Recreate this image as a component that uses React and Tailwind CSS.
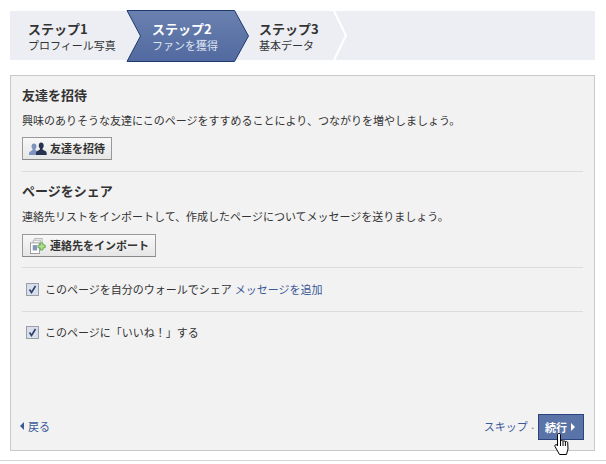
const font = { fontFamily: '"Noto Sans CJK JP", "Liberation Sans", sans-serif' };

const FriendsIcon = () => (
  <svg width="18" height="14" viewBox="0 0 18 14" className="shrink-0">
    <path d="M5 1.500c1.600 0 2.500 1.200 2.500 2.800 0 1.200-.5 2.200-1.100 2.800v1l3 1.600c.6.400.8 1 .8 2.300V13H0v-1c0-1.300.3-1.900.9-2.300l2.700-1.600v-1C3 6.500 2.500 5.500 2.500 4.300 2.500 2.700 3.400 1.500 5 1.500z" fill="#7d93c0" />
    <path d="M12 .5c1.700 0 2.700 1.300 2.700 3 0 1.300-.5 2.400-1.200 3v1.100l3.200 1.700c.7.400 1 1 1 2.400V13H7v-1.300c0-1.400.3-2 1-2.400l3-1.700V6.500c-.7-.6-1.200-1.700-1.200-3 0-1.700 1-3 2.200-3z" fill="#26324f" />
  </svg>
);

const ImportIcon = () => (
  <svg width="17" height="16" viewBox="0 0 19 18" className="shrink-0">
    <rect x="5.500" y="0.500" width="8" height="10" fill="#f4f4f4" stroke="#b5b5b5" />
    <rect x="3.500" y="2.500" width="8" height="11" fill="#f4f4f4" stroke="#b5b5b5" />
    <rect x="0.500" y="5.500" width="10" height="12" fill="#fff" stroke="#969696" />
    <rect x="3" y="8" width="5" height="6" fill="#8695b5" />
    <path d="M11.500 5.500h3v2.500H17v3h-2.500v2.500h-3V11H9V8h2.500z" fill="#b4e08f" stroke="#5fa548" />
  </svg>
);

const Check = () => (
  <span className="w-[13px] h-[13px] shrink-0 border border-[#9a9ea6] bg-[#d8deeb] flex items-center justify-center">
    <svg width="9" height="9" viewBox="0 0 9 9">
      <path d="M1.500 4.500 3.500 7.500 7.500 1" fill="none" stroke="#2d3f6c" strokeWidth="1.600" />
    </svg>
  </span>
);

const Step = ({ title, sub, active, className }) => (
  <div className={`relative h-full flex flex-col pt-[9px] ${className}`}>
    <div className={`text-[13px] leading-[17px] font-bold ${active ? 'text-white' : 'text-[#333333]'}`}>{title}</div>
    <div className={`text-[11px] leading-[17px] ${active ? 'text-[#dfe5f1]' : 'text-[#333333]'}`}>{sub}</div>
  </div>
);

const GrayButton = ({ icon, label, className }) => (
  <div className={`h-[23px] flex items-center border border-[#999999] border-b-[#888888] bg-gradient-to-b from-[#f8f8f8] to-[#e6e6e6] text-[11px] font-bold text-[#333333] ${className}`}>
    {icon}
    <span>{label}</span>
  </div>
);

export default function App() {
  return (
    <div style={font} className="w-[606px] h-[464px] bg-white overflow-hidden">
      <div className="pt-[11px] pl-[10px] w-[595px]">
        <div className="relative h-[49px] bg-[#eceef3] flex">
          <Step title="ステップ1" sub="プロフィール写真" className="pl-[18px] w-[142px]" />
          <svg width="124" height="52" viewBox="0 0 124 52" className="absolute left-[116px] top-[-1px]">
            <defs>
              <linearGradient id="activeStep" x1="0" y1="0" x2="0" y2="1">
                <stop offset="0" stopColor="#6a81b0" />
                <stop offset="1" stopColor="#51699f" />
              </linearGradient>
            </defs>
            <path d="M1 .5h107.500L122.500 26 108.500 51.500H1L14.500 26z" fill="url(#activeStep)" stroke="#1f3a6e" />
          </svg>
          <svg width="15" height="49" viewBox="0 0 15 49" className="absolute left-[323px] top-0">
            <path d="M1 0 13 24.500 1 49" fill="none" stroke="#ffffff" strokeWidth="2" />
          </svg>
          <Step title="ステップ2" sub="ファンを獲得" active className="w-[107px]" />
          <Step title="ステップ3" sub="基本データ" />
        </div>
      </div>

      <div className="mt-[15px] ml-[10px] w-[585px] h-[376px] border border-[#c9c9c9] bg-[#f2f2f2] flex flex-col px-[11px]">
        <h2 className="mt-[10px] text-[13px] leading-[18px] font-bold text-[#333333]">友達を招待</h2>
        <p className="mt-[9px] text-[11px] leading-[15px] text-[#333333]">
          興味のありそうな友達にこのページをすすめることにより、つながりを増やしましょう。
        </p>
        <GrayButton icon={<FriendsIcon />} label="友達を招待" className="mt-[9px] w-[90px] pl-[6px] gap-[3px]" />
        <div className="mt-[11px] border-t border-[#dcdcdc]" />

        <h2 className="mt-[10px] text-[13px] leading-[18px] font-bold text-[#333333]">ページをシェア</h2>
        <p className="mt-[9px] text-[11px] leading-[15px] text-[#333333]">
          連絡先リストをインポートして、作成したページについてメッセージを送りましょう。
        </p>
        <GrayButton icon={<ImportIcon />} label="連絡先をインポート" className="mt-[10px] w-[134px] pl-[7px] gap-[3px]" />
        <div className="mt-[10px] border-t border-[#dcdcdc]" />

        <div className="mt-[13px] pl-[4px] h-[17px] flex items-center gap-[6px] text-[11px] text-[#333333]">
          <Check />
          <span>このページを自分のウォールでシェア</span>
          <span className="text-[#3b5998] -ml-[3px]">メッセージを追加</span>
        </div>
        <div className="mt-[13px] border-t border-[#dcdcdc]" />
        <div className="mt-[12px] pl-[4px] h-[17px] flex items-center gap-[6px] text-[11px] text-[#333333]">
          <Check />
          <span>このページに「いいね！」する</span>
        </div>

        <div className="mt-auto mb-[10px] flex items-center justify-between">
          <div className="flex items-center gap-[4px] text-[11px] text-[#3b5998] -ml-[2px] -mt-[2px]">
            <span className="w-0 h-0 border-y-[4px] border-y-transparent border-r-[4px] border-r-[#3b5998]" />
            <span>戻る</span>
          </div>
          <div className="flex items-center -mr-[1px]">
            <span className="text-[11px] text-[#3b5998] -mt-[2px]">スキップ</span>
            <span className="text-[11px] text-[#777777] mx-[2px]">·</span>
            <div className="relative w-[46px] h-[26px] bg-[#5b74a8] border border-[#29447e] flex items-center pl-[6px] gap-[4px] text-[11px] font-bold text-white">
              <span>続行</span>
              <span className="w-0 h-0 border-y-[4px] border-y-transparent border-l-[4px] border-l-white" />
              <svg width="20" height="24" viewBox="0 0 20 24" className="absolute left-[14px] top-[17px]">
                <path d="M6 1.500c.9 0 1.500.6 1.500 1.500v6c.6-.6 2-.6 2.500.2.700-.5 2-.3 2.400.5.800-.4 2-.1 2.300.8l.3 6.500-1.500 5.500H6.500L2 14.500c-.7-1.200.8-2.600 2-1.500l.5.800V3c0-.9.600-1.500 1.500-1.500z" fill="#ffffff" stroke="#000000" />
                <path d="M7.500 9v5M10 9.200V14M12.400 9.700V14" stroke="#000000" fill="none" />
              </svg>
            </div>
          </div>
        </div>
      </div>
      <div className="mt-[9px] border-t border-[#d5d5d5]" />
    </div>
  );
}
